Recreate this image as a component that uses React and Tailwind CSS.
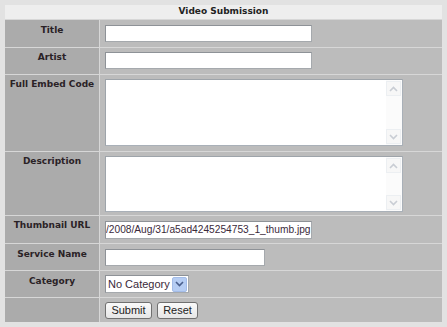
import React from "react";

const Chev = ({ up, color = "#c9cdd4" }) => (
  <svg width="9" height="6" viewBox="0 0 9 6">
    <path d={up ? "M1 5 L4.5 1.5 L8 5" : "M1 1 L4.5 4.5 L8 1"} fill="none" stroke={color} strokeWidth="1.6" />
  </svg>
);

function FakeTextarea({ h }) {
  return (
    <div className={`w-[298px] ${h} flex bg-white border border-[#a9b0b8] border-t-[#9ea4aa] border-l-[#9ea4aa]`}>
      <div className="flex-1" />
      <div className="w-[16px] flex flex-col justify-between bg-[#fbfbfb] py-px pr-px">
        <div className="h-[15px] w-[15px] flex items-center justify-center border border-[#eceff2] bg-[#f7f7f7]">
          <Chev up />
        </div>
        <div className="h-[15px] w-[15px] flex items-center justify-center border border-[#eceff2] bg-[#f7f7f7]">
          <Chev />
        </div>
      </div>
    </div>
  );
}

function Label({ children, h, pt = "pt-[4px]" }) {
  return (
    <div className={`bg-[#ababab] ${h} ${pt} text-center text-[9px] leading-[11px] font-bold text-[#2a2226]`}>
      {children}
    </div>
  );
}

function Cell({ children, h, pt = "pt-[4px]" }) {
  return <div className={`bg-[#bcbcbc] ${h} ${pt} pl-[5px]`}>{children}</div>;
}

const inputCls =
  "block bg-white border border-[#a5a9ad] border-t-[#8e9297] border-l-[#8e9297] outline-none font-['Liberation_Sans',Arial,sans-serif] text-[#3a2a3a]";

export default function App() {
  return (
    <div className="w-[447px] h-[327px] bg-[#e2e2e2] pt-[5px] pl-[5px] font-['DejaVu_Sans',Verdana,sans-serif]">
      <div className="w-[437px] grid grid-cols-[94px_342px] gap-px bg-[#d7d7d7]">
        <div className="col-span-2 h-[14px] bg-[#eeeeee] flex items-center justify-center text-[9px] font-bold text-[#222]">
          Video Submission
        </div>

        <Label h="h-[27px]" pt="pt-[5px]">Title</Label>
        <Cell h="h-[27px]" pt="pt-[5px]">
          <input className={`${inputCls} w-[207px] h-[17px]`} />
        </Cell>

        <Label h="h-[26px]">Artist</Label>
        <Cell h="h-[26px]">
          <input className={`${inputCls} w-[207px] h-[17px]`} />
        </Cell>

        <Label h="h-[76px]">Full Embed Code</Label>
        <Cell h="h-[76px]">
          <FakeTextarea h="h-[67px]" />
        </Cell>

        <Label h="h-[63px]">Description</Label>
        <Cell h="h-[63px]">
          <FakeTextarea h="h-[56px]" />
        </Cell>

        <Label h="h-[27px]">Thumbnail URL</Label>
        <Cell h="h-[27px]" pt="pt-[5px]">
          <div className={`${inputCls} w-[207px] h-[18px] text-[10.2px] leading-[16px] overflow-hidden whitespace-nowrap`}>
            /2008/Aug/31/a5ad4245254753_1_thumb.jpg
          </div>
        </Cell>

        <Label h="h-[26px]" pt="pt-[5px]">Service Name</Label>
        <Cell h="h-[26px]" pt="pt-[5px]">
          <input className={`${inputCls} w-[160px] h-[17px]`} />
        </Cell>

        <Label h="h-[26px]" pt="pt-[5px]">Category</Label>
        <Cell h="h-[26px]">
          <div className={`${inputCls} w-[84px] h-[18px] flex items-center justify-between text-[11px] pl-[2px] pr-px`}>
            <span>No Category</span>
            <div className="w-[15px] h-[15px] rounded-[2px] bg-[#b6cdf3] border border-[#a3bce8] flex items-center justify-center">
              <Chev color="#4a5f8c" />
            </div>
          </div>
        </Cell>

        <div className="bg-[#ababab] h-[24px]" />
        <Cell h="h-[24px]">
          <div className="flex gap-[5px]">
            <button className="w-[47px] h-[17px] rounded-[3px] border border-[#707070] bg-gradient-to-b from-[#fafafa] to-[#e6e6e6] text-[11px] leading-[15px] text-[#222] font-['Liberation_Sans',Arial,sans-serif]">
              Submit
            </button>
            <button className="w-[41px] h-[17px] rounded-[3px] border border-[#707070] bg-gradient-to-b from-[#fafafa] to-[#e6e6e6] text-[11px] leading-[15px] text-[#222] font-['Liberation_Sans',Arial,sans-serif]">
              Reset
            </button>
          </div>
        </Cell>
      </div>
    </div>
  );
}
